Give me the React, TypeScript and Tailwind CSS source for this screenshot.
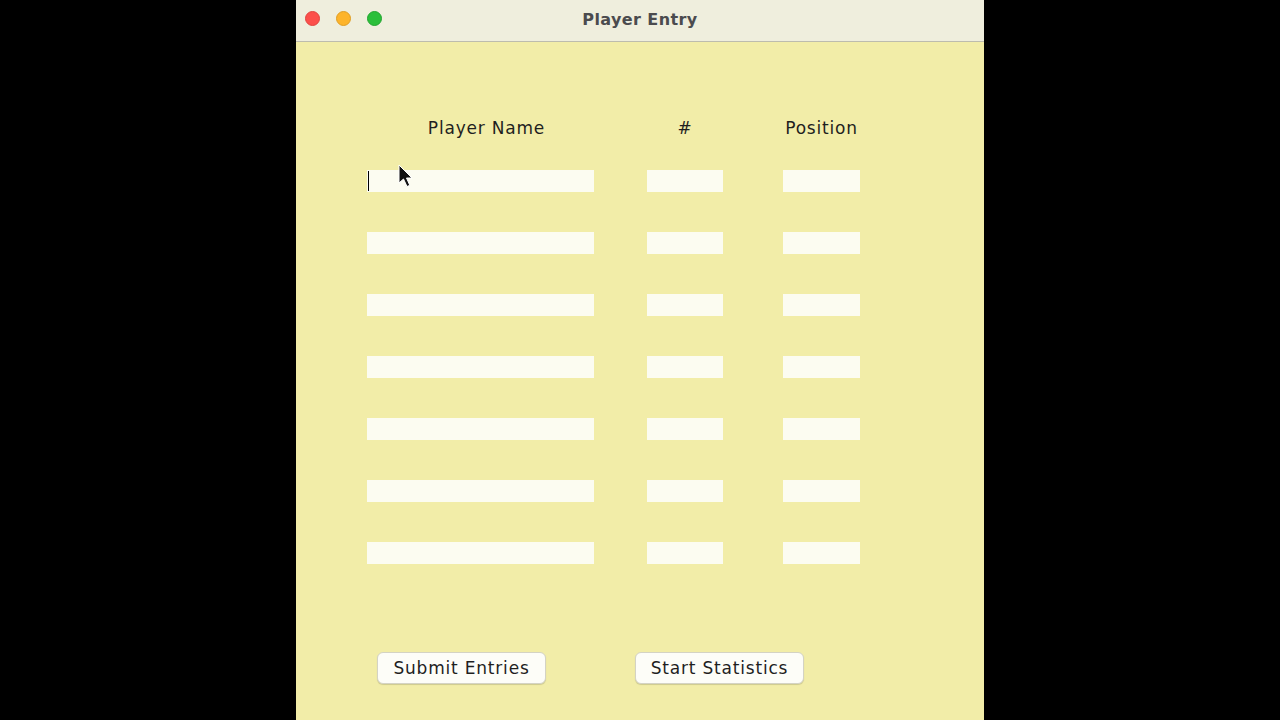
import React from 'react'

const rows = [0, 1, 2, 3, 4, 5, 6]

export default function App() {
  return (
    <div className="w-[1280px] h-[720px] bg-black flex justify-center overflow-hidden" style={{ fontFamily: '"DejaVu Sans", "Liberation Sans", sans-serif' }}>
      <div className="relative w-[688px] h-full bg-[#f2eda8] flex flex-col">
        {/* title bar */}
        <div className="relative h-[42px] shrink-0 bg-[#efeedd] border-b border-[#bdbcae] flex items-center justify-center">
          <div className="absolute left-[9px] top-[11px] flex gap-[16px]">
            <span className="w-[15px] h-[15px] rounded-full bg-[#fc4f4a] border border-[#e0443f]" />
            <span className="w-[15px] h-[15px] rounded-full bg-[#fdb42b] border border-[#e09e24]" />
            <span className="w-[15px] h-[15px] rounded-full bg-[#2bbf3a] border border-[#22a52f]" />
          </div>
          <span className="text-[16px] font-bold text-[#4b4b4e] tracking-[0.4px] -mt-[2px]">Player Entry</span>
        </div>

        {/* form */}
        <div className="flex flex-col pl-[71px] pt-[76px]">
          <div className="flex h-[22px] items-center text-[17px] tracking-[0.8px] text-[#1f1f1f]">
            <div className="w-[227px] text-center pl-[12px]">Player Name</div>
            <div className="ml-[53px] w-[76px] text-center">#</div>
            <div className="ml-[60px] w-[77px] text-center">Position</div>
          </div>
          <div className="mt-[30px] flex flex-col gap-[40px]">
            {rows.map((r) => (
              <div key={r} className="flex h-[22px]">
                <div className="relative w-[227px] bg-[#fcfcf1]">
                  {r === 0 && <span className="absolute left-[1px] top-[1px] w-[1px] h-[20px] bg-black" />}
                </div>
                <div className="ml-[53px] w-[76px] bg-[#fcfcf1]" />
                <div className="ml-[60px] w-[77px] bg-[#fcfcf1]" />
              </div>
            ))}
          </div>
        </div>

        {/* buttons */}
        <div className="mt-[88px] flex pl-[81px] gap-[89px]">
          <button className="w-[169px] h-[32px] rounded-[6px] bg-[#fdfdf8] border border-[#d4d3c4] shadow-[0_1px_1px_rgba(0,0,0,0.15)] text-[17px] tracking-[0.8px] text-[#1f1f1f] pt-[1px]">
            Submit Entries
          </button>
          <button className="w-[169px] h-[32px] rounded-[6px] bg-[#fdfdf8] border border-[#d4d3c4] shadow-[0_1px_1px_rgba(0,0,0,0.15)] text-[17px] tracking-[0.8px] text-[#1f1f1f] pt-[1px]">
            Start Statistics
          </button>
        </div>

        {/* mouse pointer */}
        <svg className="absolute left-[102px] top-[164px]" width="16" height="24" viewBox="0 0 16 24">
          <path d="M1 1 L1 19 L5.5 15 L9 22.5 L11.8 21.3 L8.5 14 L14 14 Z" fill="#111" stroke="#fff" strokeWidth="1" />
        </svg>
      </div>
    </div>
  )
}
